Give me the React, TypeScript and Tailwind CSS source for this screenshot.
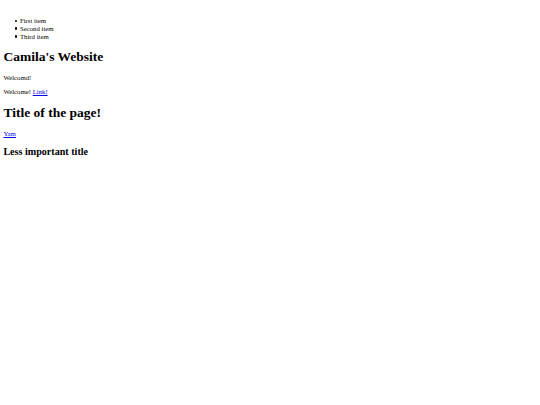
const items = ['First item', 'Second item', 'Third item'];

export default function App() {
  return (
    <div className="min-h-[405px] bg-white px-[3.4px] pt-[10.25px] text-[6.75px] leading-[1.15] text-black [font-family:'Liberation_Serif','Times_New_Roman',serif]">
      <ul className="my-[6.75px] pl-[11.4px]">
        {items.map((item) => (
          <li key={item} className="flex items-center">
            <span className="mr-[2.8px] h-[2.4px] w-[2.4px] shrink-0 rounded-full bg-black" />
            {item}
          </li>
        ))}
      </ul>
      <h1 className="my-[9px] text-[13.5px] font-bold">Camila's Website</h1>
      <p className="my-[6.75px]">Welcomd!</p>
      <p className="my-[6.75px]">
        Welcome! <a href="#" className="text-[#0000ee] underline">Link!</a>
      </p>
      <h1 className="my-[9px] text-[13.5px] font-bold">Title of the page!</h1>
      <p className="my-[6.75px]">
        <a href="#" className="text-[#0000ee] underline">Yam</a>
      </p>
      <h2 className="my-[8.4px] text-[10.1px] font-bold">Less important title</h2>
    </div>
  );
}
